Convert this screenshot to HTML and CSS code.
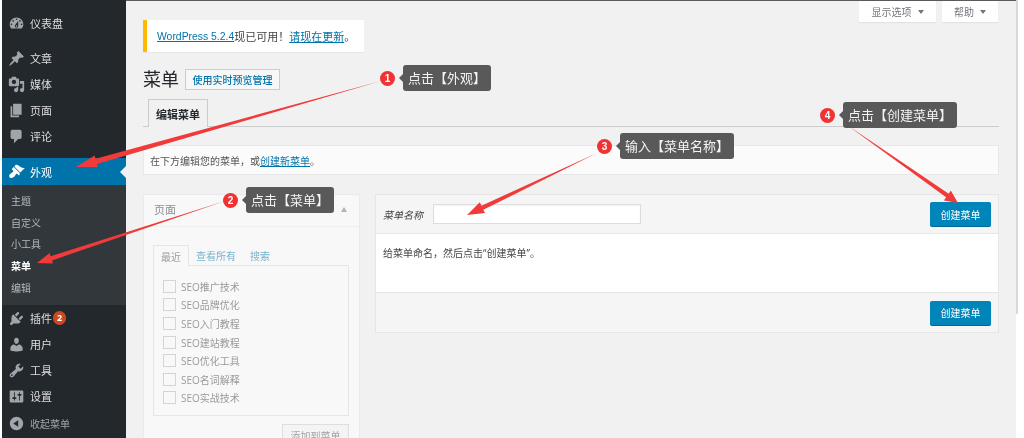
FILE: index.html
```html
<!DOCTYPE html>
<html lang="zh-CN">
<head>
<meta charset="utf-8">
<title>菜单</title>
<link rel="stylesheet" href="styles.css">
</head>
<body>
<div class="shell">
  <nav class="sidebar">
    <a class="item"><svg class="ico" viewBox="0 0 20 20"><path d="M3.76 16h12.48c1.1-1.37 1.76-3.11 1.76-5 0-4.42-3.58-8-8-8s-8 3.58-8 8c0 1.89.66 3.63 1.76 5zM10 4c.55 0 1 .45 1 1s-.45 1-1 1-1-.45-1-1 .45-1 1-1zM6 6c.55 0 1 .45 1 1s-.45 1-1 1-1-.45-1-1 .45-1 1-1zm8 0c.55 0 1 .45 1 1s-.45 1-1 1-1-.45-1-1 .45-1 1-1zm-5.37 5.55L12 7v6c0 1.1-.9 2-2 2s-2-.9-2-2c0-.57.24-1.08.63-1.45zM4 10c.55 0 1 .45 1 1s-.45 1-1 1-1-.45-1-1 .45-1 1-1zm12 0c.55 0 1 .45 1 1s-.45 1-1 1-1-.45-1-1 .45-1 1-1zm-5 3c0-.55-.45-1-1-1s-1 .45-1 1 .45 1 1 1 1-.45 1-1z"/></svg>仪表盘</a>
    <div class="sep"></div>
    <a class="item"><svg class="ico" viewBox="0 0 20 20"><path d="M10.44 3.02l1.82-1.82 6.36 6.35-1.83 1.82c-1.05-.68-2.48-.57-3.41.36l-.75.75c-.92.93-1.04 2.35-.35 3.41l-1.83 1.82-2.41-2.41-2.8 2.79c-.42.42-3.38 2.71-3.8 2.29s1.86-3.39 2.28-3.81l2.79-2.79L4.1 9.36l1.83-1.82c1.05.69 2.48.57 3.4-.36l.75-.75c.93-.92 1.05-2.35.36-3.41z"/></svg>文章</a>
    <a class="item"><svg class="ico" viewBox="0 0 20 20"><path d="M13 11V4c0-.55-.45-1-1-1h-1.67L9 1H5L3.67 3H2c-.55 0-1 .45-1 1v7c0 .55.45 1 1 1h10c.55 0 1-.45 1-1zM7 4.5c1.38 0 2.5 1.12 2.5 2.5S8.38 9.5 7 9.5 4.5 8.38 4.5 7 5.62 4.5 7 4.5zM14 6h5v10.5c0 1.38-1.12 2.5-2.5 2.5S14 17.88 14 16.5s1.12-2.5 2.5-2.5c.17 0 .34.02.5.05V9h-3V6zm-4 8.05V13h2v3.5c0 1.38-1.12 2.5-2.5 2.5S7 17.88 7 16.5 8.12 14 9.5 14c.17 0 .34.02.5.05z"/></svg>媒体</a>
    <a class="item"><svg class="ico" viewBox="0 0 20 20"><path d="M6 15V2h10v13H6zm-1 1h8v2H3V5h2v11z"/></svg>页面</a>
    <a class="item"><svg class="ico" viewBox="0 0 20 20"><path d="M5 2h9c1.1 0 2 .9 2 2v7c0 1.1-.9 2-2 2h-2l-5 5v-5H5c-1.1 0-2-.9-2-2V4c0-1.1.9-2 2-2z"/></svg>评论</a>
    <div class="sep"></div>
    <a class="item current"><svg class="ico" viewBox="0 0 20 20"><path d="M14.48 11.06L7.41 3.99l1.5-1.5c.5-.56 2.3-.47 3.51.32 1.21.8 1.43 1.28 2.91 2.1 1.18.64 2.45 1.26 4.45.85zm-.71.71L6.7 4.7 4.93 6.47c-.39.39-.39 1.02 0 1.41l1.06 1.06c.39.39.39 1.03 0 1.42-.6.6-1.43 1.11-2.21 1.69-.35.26-.7.53-1.01.84C1.43 13.23.78 15.6 2.1 16.92c1.32 1.32 3.69.67 5.03-.67.31-.31.58-.66.84-1.01.58-.78 1.09-1.61 1.69-2.21.39-.39 1.03-.39 1.42 0l1.06 1.06c.39.39 1.02.39 1.41 0z"/></svg>外观</a>
    <div class="submenu">
      <a class="subitem">主题</a>
      <a class="subitem">自定义</a>
      <a class="subitem">小工具</a>
      <a class="subitem active">菜单</a>
      <a class="subitem">编辑</a>
    </div>
    <a class="item"><svg class="ico" viewBox="0 0 20 20"><path d="M13.11 4.36L9.87 7.6 8 5.73l3.24-3.24c.35-.34 1.05-.2 1.56.32.52.51.66 1.21.31 1.55zm-8 1.77l.91-1.12 9.01 9.01-1.19.84c-.71.71-2.63 1.16-3.82 1.16H6.14L4.9 17.26c-.59.59-1.54.59-2.12 0-.59-.58-.59-1.53 0-2.12l1.24-1.24v-3.88c0-1.13.4-3.19 1.09-3.89zm7.26 3.97l3.24-3.24c.34-.35 1.04-.21 1.55.31.52.51.66 1.21.31 1.55l-3.24 3.25z"/></svg>插件<span class="badge">2</span></a>
    <a class="item"><svg class="ico" viewBox="0 0 20 20"><path d="M10 9.25c-2.27 0-2.73-3.44-2.73-3.44C7 4.02 7.82 2 9.97 2c2.16 0 2.98 2.02 2.71 3.81 0 0-.41 3.44-2.68 3.44zm0 2.57L12.72 10c2.39 0 4.52 2.33 4.52 4.53v2.49s-3.65 1.13-7.24 1.13c-3.65 0-7.24-1.13-7.24-1.13v-2.49c0-2.25 1.94-4.48 4.47-4.48z"/></svg>用户</a>
    <a class="item"><svg class="ico" viewBox="0 0 20 20"><path d="M16.68 9.77c-1.34 1.34-3.3 1.67-4.95.99l-5.41 6.52c-.99.99-2.59.99-3.58 0s-.99-2.59 0-3.57l6.52-5.42c-.68-1.65-.35-3.61.99-4.95 1.28-1.28 3.12-1.62 4.72-1.06l-2.89 2.89 2.82 2.82 2.86-2.87c.53 1.58.18 3.39-1.08 4.65zM3.81 16.21c.4.39 1.04.39 1.43 0 .4-.4.4-1.04 0-1.43-.39-.4-1.03-.4-1.43 0-.39.39-.39 1.03 0 1.43z"/></svg>工具</a>
    <a class="item"><svg class="ico" viewBox="0 0 20 20"><path d="M18 16V4c0-.55-.45-1-1-1H3c-.55 0-1 .45-1 1v12c0 .55.45 1 1 1h14c.55 0 1-.45 1-1zM8 11h1c.55 0 1 .45 1 1s-.45 1-1 1H8v1.5c0 .28-.22.5-.5.5s-.5-.22-.5-.5V13H6c-.55 0-1-.45-1-1s.45-1 1-1h1V5.5c0-.28.22-.5.5-.5s.5.22.5.5V11zm5-2h-1c-.55 0-1-.45-1-1s.45-1 1-1h1V5.5c0-.28.22-.5.5-.5s.5.22.5.5V7h1c.55 0 1 .45 1 1s-.45 1-1 1h-1v5.5c0 .28-.22.5-.5.5s-.5-.22-.5-.5V9z"/></svg>设置</a>
    <a class="item collapse"><svg class="ico" viewBox="0 0 20 20"><path d="M10 2.16c4.33 0 7.84 3.51 7.84 7.84s-3.51 7.84-7.84 7.84S2.16 14.33 2.16 10 5.71 2.16 10 2.16zm2 11.72V6.12L6.18 9.97z"/></svg>收起菜单</a>
  </nav>

  <main class="main">
    <div class="screen-meta">
      <span class="meta-btn meta-wide">显示选项<i class="caret"></i></span>
      <span class="meta-btn meta-narrow">帮助<i class="caret"></i></span>
    </div>
    <div class="notice"><a class="link version">WordPress 5.2.4</a>现已可用！<a class="link">请现在更新</a>。</div>
    <div class="title-row">
      <h1 class="title">菜单</h1>
      <span class="title-action">使用实时预览管理</span>
    </div>
    <div class="tabs"><span class="tab">编辑菜单</span></div>
    <div class="manage">在下方编辑您的菜单，或<a class="link">创建新菜单</a>。</div>
    <div class="columns">
      <section class="pages-box">
        <header class="pages-head"><span>页面</span><i class="up"></i></header>
        <div class="pages-body">
          <div class="mini-tabs">
            <span class="mini-tab on">最近</span>
            <span class="mini-tab">查看所有</span>
            <span class="mini-tab">搜索</span>
          </div>
          <ul class="checks">
            <li class="check"><i class="box"></i>SEO推广技术</li>
            <li class="check"><i class="box"></i>SEO品牌优化</li>
            <li class="check"><i class="box"></i>SEO入门教程</li>
            <li class="check"><i class="box"></i>SEO建站教程</li>
            <li class="check"><i class="box"></i>SEO优化工具</li>
            <li class="check"><i class="box"></i>SEO名词解释</li>
            <li class="check"><i class="box"></i>SEO实战技术</li>
          </ul>
          <div class="add-row"><span class="add-btn">添加到菜单</span></div>
        </div>
      </section>
      <section class="edit-box">
        <header class="edit-head">
          <label class="name-label">菜单名称</label>
          <span class="name-input"></span>
          <span class="primary">创建菜单</span>
        </header>
        <div class="edit-body">给菜单命名，然后点击“创建菜单”。</div>
        <footer class="edit-foot"><span class="primary">创建菜单</span></footer>
      </section>
    </div>
  </main>
  <div class="stripe"></div>
</div>

<svg class="arrows" viewBox="0 0 1024 438" width="1024" height="438">
  <polygon class="arrow" points="381,81 95.5,158.7 94.6,155.5 76,167 97.8,167.1 96.9,163.9"/>
  <polygon class="arrow" points="225,201 50.6,256.2 49.6,253.1 37,263 53,263.5 52,260.4"/>
  <polygon class="arrow" points="597,153 481.5,205.7 479.8,202.3 467,215 485,213.1 483.3,209.7"/>
  <polygon class="arrow" points="847,125 946.1,197.3 943.9,200.4 958,203 950.8,190.6 948.7,193.7"/>
</svg>

<div class="note note-1"><b class="num">1</b><span class="tip">点击【外观】</span></div>
<div class="note note-2"><b class="num">2</b><span class="tip">点击【菜单】</span></div>
<div class="note note-3"><b class="num">3</b><span class="tip">输入【菜单名称】</span></div>
<div class="note note-4"><b class="num">4</b><span class="tip">点击【创建菜单】</span></div>
</body>
</html>
```
FILE: styles.css
```css
* { box-sizing: border-box; }
html, body { margin: 0; height: 438px; overflow: hidden; background: #fff; }
body {
  position: relative;
  font-family: "Open Sans", "Noto Sans CJK SC", sans-serif;
  font-size: 10px;
  color: #555;
  filter: blur(0.45px);
}
.shell { display: flex; align-items: flex-start; height: 438px; padding-left: 2px; }

/* sidebar */
.sidebar { width: 124px; height: 438px; flex: none; background: #23282d; padding-top: 10px; color: #eee; }
.item { position: relative; display: flex; align-items: center; height: 26px; padding-left: 6px; font-size: 11px; color: #dcddde; }
.ico { width: 17px; height: 17px; margin-right: 5px; fill: #a0a5aa; flex: none; }
.sep { height: 9px; }
.current { height: 27px; background: #0073aa; color: #fff; }
.current .ico { fill: #fff; }
.current::after {
  content: ""; position: absolute; right: 0; top: 8px;
  border: 6px solid transparent; border-right-color: #f1f1f1; border-left-width: 0;
}
.submenu { background: #32373c; height: 120px; padding: 5px 0 6px; }
.subitem { display: flex; align-items: center; height: 21.6px; padding-left: 9px; font-size: 10px; color: #b4b9be; }
.active { color: #fff; font-weight: 700; }
.badge {
  width: 13px; height: 14px; margin-left: 1px; border-radius: 7px; background: #ca4a1f;
  color: #fff; font-size: 9px; font-weight: 700; line-height: 14px; text-align: center;
}
.collapse { margin-top: 1px; font-size: 10px; color: #a0a5aa; }

/* main */
.main {
  width: 890px; height: 438px; flex: none; background: #f1f1f1;
  border-top: 1px solid #5a5a5a; padding: 19px 17px 0;
}
.stripe { width: 2px; height: 314px; flex: none; background: #d8d8d8; }
.screen-meta { float: right; display: flex; gap: 6px; margin: -19px 1px 0 0; }
.meta-btn {
  display: flex; align-items: center; justify-content: center; gap: 6px;
  height: 21px; background: #fff; color: #72777c; box-shadow: 0 1px 1px rgba(0,0,0,.06);
}
.meta-wide { width: 77px; }
.meta-narrow { width: 56px; }
.caret { border: 3px solid transparent; border-top: 4px solid #72777c; border-bottom-width: 0; }
.link { color: #0073aa; text-decoration: underline; }
.notice {
  width: 221px; height: 32px; padding-left: 10px; display: flex; align-items: center;
  background: #fff; border-left: 4px solid #ffb900; font-family: "Liberation Sans", "Noto Sans CJK SC", sans-serif; font-size: 11px; color: #444;
  box-shadow: 0 1px 1px rgba(0,0,0,.04);
}
.version { font-size: 10.4px; }
.title-row { display: flex; align-items: center; gap: 6px; height: 22px; margin-top: 16px; }
.title { margin: 0; font-size: 18px; font-weight: 400; color: #23282d; line-height: 22px; }
.title-action {
  display: flex; align-items: center; justify-content: center; width: 95px; height: 21px;
  background: #f7f7f7; border: 1px solid #ccc; color: #0073aa; font-weight: 500;
}
.tabs { height: 28px; margin-top: 9px; padding-left: 5px; border-bottom: 1px solid #ccc; }
.tab {
  display: flex; align-items: center; justify-content: center; width: 60px; height: 28px;
  background: #f1f1f1; border: 1px solid #ccc; border-bottom: 0; font-size: 11px; font-weight: 700; color: #23282d;
}
.manage {
  display: flex; align-items: center; height: 30px; margin-top: 18px; padding-left: 6px;
  background: #fbfbfb; border: 1px solid #e8e8e8;
}
.columns { display: flex; gap: 15px; margin-top: 19px; align-items: flex-start; }

/* pages box */
.pages-box { width: 217px; flex: none; height: 260px; background: #fff; border: 1px solid #e5e5e5; opacity: .5; }
.pages-head {
  display: flex; align-items: center; justify-content: space-between; height: 32px;
  padding: 0 12px 3px 10px; border-bottom: 1px solid #eee; font-size: 11px; color: #23282d;
}
.up { border: 3.5px solid transparent; border-bottom: 5px solid #72777c; border-top-width: 0; }
.pages-body { padding: 18px 10px 0 9px; }
.mini-tabs { display: flex; height: 20px; }
.mini-tab { display: flex; align-items: center; padding: 0 7px; color: #0073aa; }
.mini-tab.on { position: relative; z-index: 1; height: 21px; border: 1px solid #ddd; border-bottom: 0; background: #fff; color: #444; }
.checks {
  list-style: none; margin: 0; padding: 11px 9px 9px; height: 151px; border: 1px solid #ddd;
}
.check { display: flex; align-items: center; gap: 5px; height: 18.6px; color: #444; }
.box { width: 13px; height: 13px; border: 1px solid #b4b9be; background: #fff; }
.add-row { display: flex; justify-content: flex-end; margin-top: 8px; }
.add-btn {
  display: flex; align-items: center; justify-content: center; width: 67px; height: 22px;
  background: #f7f7f7; border: 1px solid #ccc; color: #555;
}

/* edit box */
.edit-box { flex: 1; background: #f5f5f5; border: 1px solid #e5e5e5; height: 139px; }
.edit-head { display: flex; align-items: center; height: 39px; padding: 0 7px 0 7px; border-bottom: 1px solid #e5e5e5; }
.name-label { width: 50px; font-style: italic; color: #444; }
.name-input { width: 208px; height: 20px; background: #fff; border: 1px solid #ddd; box-shadow: inset 0 1px 2px rgba(0,0,0,.05); }
.primary {
  display: flex; align-items: center; justify-content: center; width: 61px; height: 24px; margin-left: auto;
  background: #0085ba; border-radius: 2px; color: #fff; box-shadow: 0 1px 0 #006799;
}
.edit-body { height: 58px; padding: 11px 0 0 7px; background: #fff; color: #444; }
.edit-foot { display: flex; align-items: center; height: 39px; padding: 1px 7px 0 0; border-top: 1px solid #e5e5e5; }

/* annotations */
.arrows { position: absolute; left: 0; top: 0; pointer-events: none; }
.arrow { fill: #f13a3a; }
.note { position: absolute; display: flex; align-items: center; height: 26px; }
.note-1 { left: 380px; top: 65px; }
.note-2 { left: 223px; top: 187px; }
.note-3 { left: 597px; top: 133px; }
.note-4 { left: 820px; top: 102px; }
.num {
  width: 15px; height: 15px; border-radius: 50%; background: #f13232; color: #fff;
  font: 700 10px/15px "Liberation Sans", sans-serif; text-align: center;
}
.tip {
  position: relative; height: 26px; margin-left: 8px; padding: 0 5px; border-radius: 3px;
  background: #595959; color: #f4f4f4; font-size: 13px; line-height: 26px; white-space: nowrap;
}
.tip::before {
  content: ""; position: absolute; left: -4px; top: 9px;
  border: 4px solid transparent; border-right-color: #595959; border-left-width: 0;
}
```
